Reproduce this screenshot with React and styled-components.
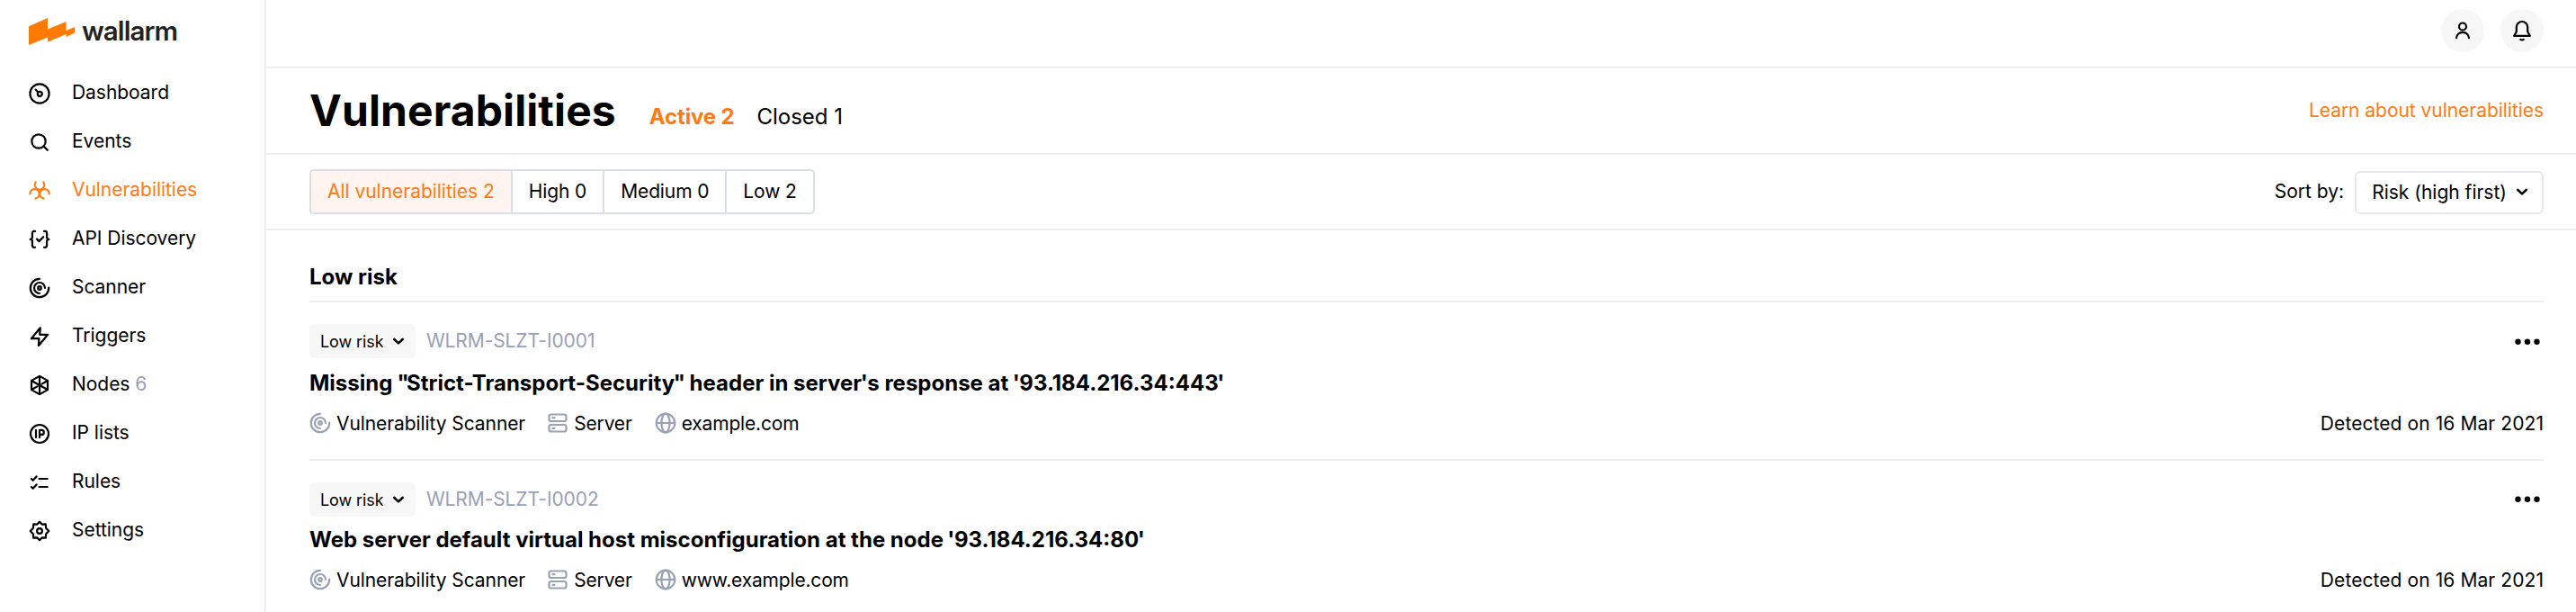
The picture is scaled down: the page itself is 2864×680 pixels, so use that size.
import React from "react";
import styled, { createGlobalStyle, css } from "styled-components";

const Global = createGlobalStyle`
  * { box-sizing: border-box; }
  body { margin: 0; background: #fff; color: #000; font-family: Inter, "Liberation Sans", sans-serif; font-size: 21px; }
`;

const orange = "#ff7a10";
const line = "#ededf2";
const muted = "#98a1b5";

const Page = styled.div`
  display: flex;
  height: 680px;
  overflow: hidden;
`;
const Sidebar = styled.aside`
  width: 296px;
  flex: none;
  border-right: 2px solid ${line};
  display: flex;
  flex-direction: column;
`;
const Logo = styled.div`
  display: flex;
  height: 77px;
  padding: 16px 0 0 32px;
  gap: 8px;
`;
const LogoText = styled.span`
  font-size: 29.5px;
  line-height: 36px;
  font-weight: 600;
  letter-spacing: -0.9px;
  color: #222;
`;
const NavItem = styled.a`
  display: flex;
  align-items: center;
  height: 54px;
  padding-left: 32px;
  gap: 24px;
  color: ${(p) => (p.$active ? orange : "#000")};
`;
const NavLabel = styled.span`
  padding-bottom: 3px;
  white-space: pre;
  letter-spacing: -0.04px;
`;
const Count = styled.span`
  color: ${muted};
`;
const Svg = styled.svg.attrs((p) => ({
  viewBox: p.viewBox || "0 0 24 24",
  fill: p.fill || "none",
  stroke: p.stroke || "currentColor",
  strokeWidth: p.strokeWidth || 2.2,
  strokeLinecap: "round",
  strokeLinejoin: "round",
}))`
  width: ${(p) => p.$size || 24}px;
  height: ${(p) => p.$size || 24}px;
  flex: none;
  display: block;
`;
const Main = styled.main`
  flex: 1;
  min-width: 0;
`;
const TopBar = styled.header`
  height: 76px;
  border-bottom: 2px solid ${line};
  display: flex;
  justify-content: flex-end;
  gap: 18px;
  padding: 10px 36px 0 0;
`;
const RoundButton = styled.button`
  width: 48px;
  height: 48px;
  border: 0;
  border-radius: 50%;
  padding: 0;
  background: #f7f7f7;
  color: #000;
  display: flex;
  align-items: center;
  justify-content: center;
`;
const TitleBar = styled.div`
  height: 96px;
  border-bottom: 2px solid ${line};
  display: flex;
  align-items: flex-start;
  padding: 17px 36px 0 48px;
`;
const Title = styled.h1`
  margin: 0;
  font-size: 48px;
  line-height: 60px;
  font-weight: 700;
  letter-spacing: 0.1px;
`;
const StatusTab = styled.a`
  font-size: 24px;
  line-height: 60px;
  padding-top: 7px;
  margin-left: ${(p) => p.$gap}px;
  ${(p) => p.$active && css`color: ${orange}; font-weight: 700; letter-spacing: -0.15px;`}
`;
const LearnLink = styled.a`
  margin-left: auto;
  line-height: 26px;
  padding-top: 17px;
  letter-spacing: -0.04px;
  color: ${orange};
`;
const FilterBar = styled.div`
  height: 84px;
  border-bottom: 2px solid ${line};
  display: flex;
  align-items: flex-start;
  justify-content: space-between;
  padding: 16px 36px 0 48px;
`;
const Segments = styled.div`
  display: flex;
  height: 50px;
  border: 2px solid #dadee6;
  border-radius: 5px;
  overflow: hidden;
`;
const Segment = styled.button`
  font: inherit;
  border: 0;
  padding: 0 18px 2px;
  letter-spacing: ${(p) => (p.$active ? -0.03 : -0.12)}px;
  color: ${(p) => (p.$active ? orange : "#000")};
  background: ${(p) => (p.$active ? "#fff4ef" : "#fff")};
  & + & { border-left: 2px solid #dadee6; }
`;
const Sort = styled.div`
  display: flex;
  align-items: center;
  gap: 12px;
  padding-top: 2px;
`;
const SortLabel = styled.span`
  padding-bottom: 3px;
`;
const Select = styled.button`
  font: inherit;
  color: #000;
  background: #fff;
  height: 48px;
  border: 2px solid #e6e7ed;
  border-radius: 6px;
  display: flex;
  align-items: center;
  padding: 0 15px 2px 17px;
  gap: 10px;
`;
const List = styled.section`
  padding: 0 36px 0 48px;
`;
const GroupTitle = styled.h2`
  margin: 0;
  height: 80px;
  padding-top: 36px;
  font-size: 24px;
  line-height: 32px;
  font-weight: 700;
  border-bottom: 2px solid ${line};
`;
const Item = styled.article`
  height: ${(p) => p.$height}px;
  padding-top: 24px;
  border-bottom: 2px solid ${line};
`;
const ItemTop = styled.div`
  display: flex;
  align-items: flex-start;
  height: ${(p) => p.$height}px;
`;
const RiskTag = styled.button`
  font: inherit;
  font-size: 18px;
  letter-spacing: -0.1px;
  color: #000;
  background: #f7f7f7;
  border: 0;
  border-radius: 6px;
  height: 38px;
  width: 118px;
  padding: 0 12px;
  display: flex;
  align-items: center;
  justify-content: space-between;
`;
const ItemId = styled.span`
  color: ${muted};
  letter-spacing: -0.1px;
  margin-left: 12px;
  line-height: 37px;
`;
const More = styled(Svg)`
  margin-left: auto;
  align-self: center;
  width: 36px;
`;
const ItemTitle = styled.h3`
  margin: 0;
  padding-top: 12px;
  font-size: 24px;
  line-height: 32px;
  font-weight: 700;
`;
const quoteSpacing = {
  open: css`margin-left: -0.5px; letter-spacing: -2.8px;`,
  close: css`margin-left: -1.6px; letter-spacing: -1px;`,
  single: css`margin-left: -1.3px; letter-spacing: -0.5px;`,
};
const Quote = styled.span`
  ${(p) => quoteSpacing[p.$kind]}
`;
const Meta = styled.div`
  display: flex;
  align-items: center;
  height: 30px;
  margin-top: 13px;
`;
const MetaItem = styled.span`
  display: flex;
  align-items: center;
  gap: 6px;
  margin-right: ${(p) => p.$gap || 24}px;
  letter-spacing: ${(p) => (p.$tight ? -0.17 : -0.08)}px;
  svg { color: ${muted}; }
`;
const Detected = styled.span`
  margin-left: auto;
  letter-spacing: 0.08px;
`;

const ScannerShapes = () => (
  <>
    <path d="M12 1.8A10.2 10.2 0 1 0 22.2 11.6" />
    <path d="M12 18a6 6 0 1 1 6-6" />
    <circle cx="12" cy="12" r="1.8" />
  </>
);

const icons = {
  dashboard: (
    <>
      <circle cx="12" cy="12" r="10.6" />
      <circle cx="12.3" cy="12.3" r="2.5" />
      <path d="M7.6 7.6l2.6 2.7" />
    </>
  ),
  events: (
    <>
      <circle cx="11" cy="11" r="7.7" />
      <path d="M16.6 16.6l4.2 4.2" />
    </>
  ),
  vulnerabilities: (
    <>
      <path d="M7.7 2.4a5.2 5.2 0 1 0 8.6 0" />
      <path d="M1.3 15.4a5.2 5.2 0 1 1 6 5.1" />
      <path d="M22.7 15.4a5.2 5.2 0 1 0-6 5.1" />
    </>
  ),
  api: (
    <>
      <path d="M7 2.9H5.9a2 2 0 0 0-2 2v4.6a2.3 2.3 0 0 1-2.3 2.3 2.3 2.3 0 0 1 2.3 2.3v4.7a2 2 0 0 0 2 2H7" />
      <path d="M17 2.9h1.1a2 2 0 0 1 2 2v4.6a2.3 2.3 0 0 0 2.3 2.3 2.3 2.3 0 0 0-2.3 2.3v4.7a2 2 0 0 1-2 2H17" />
      <path d="M9 11.6l2.5 2.5 4.7-4.9" />
    </>
  ),
  scanner: <ScannerShapes />,
  triggers: <path d="M12.8 2.3L2.8 14.2h8.6l-.5 7.8L21.2 9.8h-9z" />,
  nodes: (
    <>
      <path d="M12 1.9l9 5v10.2l-9 5-9-5V6.9z" />
      <path d="M12 2v20M3.5 7.2l17 9.6M20.5 7.2l-6 3.4M9.5 13.4l-6 3.4" />
    </>
  ),
  ip: (
    <>
      <circle cx="12" cy="12" r="10" />
      <path d="M8 7.9v8.2M12 16.1V7.9h2.3a2.5 2.5 0 0 1 0 5H12" />
    </>
  ),
  rules: <path d="M11.5 8h9.2M11.5 17h9.2M2.9 8l1.7 1.8 4-4.4M2.9 17l1.7 1.8 4-4.4" />,
  settings: (
    <>
      <circle cx="12" cy="12" r="2.9" />
      <path d="M12 1.7l2.6 2.9 4.2-.2.3 4.3L22.3 12l-3.2 3.3-.3 4.3-4.2-.2L12 22.3l-2.6-2.9-4.2.2-.3-4.3L1.7 12l3.2-3.3.3-4.3 4.2.2z" />
    </>
  ),
};

const nav = [
  ["dashboard", "Dashboard"],
  ["events", "Events"],
  ["vulnerabilities", "Vulnerabilities"],
  ["api", "API Discovery"],
  ["scanner", "Scanner"],
  ["triggers", "Triggers"],
  ["nodes", "Nodes", "6"],
  ["ip", "IP lists"],
  ["rules", "Rules"],
  ["settings", "Settings"],
];

const items = [
  {
    id: "WLRM-SLZT-I0001",
    title: `Missing "Strict-Transport-Security" header in server's response at '93.184.216.34:443'`,
    host: "example.com",
    height: 176,
    top: 38,
  },
  {
    id: "WLRM-SLZT-I0002",
    title: "Web server default virtual host misconfiguration at the node '93.184.216.34:80'",
    host: "www.example.com",
    height: 180,
    top: 36,
  },
];

const quoteKind = (mark, index) => {
  if (mark === "'") return "single";
  return index === 1 ? "open" : "close";
};

const Chevron = () => (
  <Svg $size={14} strokeWidth="4.4">
    <path d="M4 8.5l8 7.5 8-7.5" />
  </Svg>
);

export default function App() {
  return (
    <Page>
      <Global />
      <Sidebar>
        <Logo>
          <svg width="51" height="36" viewBox="0 0 51 36" fill="#ff7a00">
            <path d="M0 13.3L21 4v12.5L41.5 8v10L51 14v6.5L41.5 25v-3L21 30.8V25.5L0 34z" />
          </svg>
          <LogoText>wallarm</LogoText>
        </Logo>
        {nav.map(([icon, label, count]) => (
          <NavItem key={icon} $active={icon === "vulnerabilities"}>
            <Svg>{icons[icon]}</Svg>
            <NavLabel>{label}{count && <Count> {count}</Count>}</NavLabel>
          </NavItem>
        ))}
      </Sidebar>
      <Main>
        <TopBar>
          <RoundButton>
            <Svg>
              <circle cx="12" cy="7.5" r="4" />
              <path d="M5 20.3a7 6.5 0 0 1 14 0" />
            </Svg>
          </RoundButton>
          <RoundButton>
            <Svg>
              <path d="M3.2 17.9h17.6l-2.6-4.6V8.2a6.2 6.2 0 0 0-12.4 0v5.1z" />
              <path d="M10.3 21.9q1.7 1.2 3.4 0" />
            </Svg>
          </RoundButton>
        </TopBar>
        <TitleBar>
          <Title>Vulnerabilities</Title>
          <StatusTab $active $gap={37}>Active 2</StatusTab>
          <StatusTab $gap={25}>Closed 1</StatusTab>
          <LearnLink>Learn about vulnerabilities</LearnLink>
        </TitleBar>
        <FilterBar>
          <Segments>
            <Segment $active>All vulnerabilities 2</Segment>
            <Segment>High 0</Segment>
            <Segment>Medium 0</Segment>
            <Segment>Low 2</Segment>
          </Segments>
          <Sort>
            <SortLabel>Sort by:</SortLabel>
            <Select>Risk (high first) <Chevron /></Select>
          </Sort>
        </FilterBar>
        <List>
          <GroupTitle>Low risk</GroupTitle>
          {items.map((item) => (
            <Item key={item.id} $height={item.height}>
              <ItemTop $height={item.top}>
                <RiskTag>Low risk <Chevron /></RiskTag>
                <ItemId>{item.id}</ItemId>
                <More viewBox="0 0 36 24" stroke="none" fill="currentColor">
                  <circle cx="7.5" cy="12.7" r="3.2" />
                  <circle cx="18" cy="12.7" r="3.2" />
                  <circle cx="28.5" cy="12.7" r="3.2" />
                </More>
              </ItemTop>
              <ItemTitle>
                {item.title.split(/(["'])/).map((part, i) =>
                  i % 2 ? <Quote key={i} $kind={quoteKind(part, i)}>{part}</Quote> : part
                )}
              </ItemTitle>
              <Meta>
                <MetaItem>
                  <Svg><ScannerShapes /></Svg>
                  Vulnerability Scanner
                </MetaItem>
                <MetaItem $tight $gap={25}>
                  <Svg>
                    <rect x="2.5" y="2.5" width="19" height="7.5" rx="2" />
                    <rect x="2.5" y="14" width="19" height="7.5" rx="2" />
                    <path d="M6.5 6.2h2M6.5 17.8h2" />
                  </Svg>
                  Server
                </MetaItem>
                <MetaItem $tight>
                  <Svg>
                    <circle cx="12" cy="12" r="10.3" />
                    <ellipse cx="12" cy="12" rx="4.6" ry="10.3" />
                    <path d="M2 12h20" />
                  </Svg>
                  {item.host}
                </MetaItem>
                <Detected>Detected on 16 Mar 2021</Detected>
              </Meta>
            </Item>
          ))}
        </List>
      </Main>
    </Page>
  );
}
